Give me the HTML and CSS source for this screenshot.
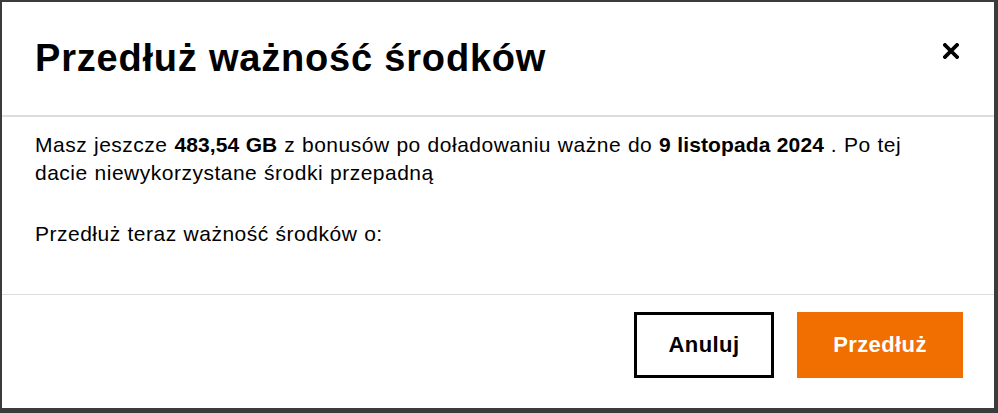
FILE: index.html
```html
<!DOCTYPE html>
<html lang="pl">
<head>
<meta charset="utf-8">
<link rel="stylesheet" href="styles.css">
</head>
<body>
<div class="dialog">
  <div class="header">
    <h1 class="title">Przedłuż ważność środków</h1>
    <button class="close" aria-label="Zamknij">
      <svg width="16" height="16" viewBox="0 0 16 16"><path d="M2 2 L14 14 M14 2 L2 14" stroke="#000" stroke-width="3.8" stroke-linecap="square" fill="none"/></svg>
    </button>
  </div>
  <div class="body">
    <p class="text">Masz jeszcze <b>483,54 GB</b> z bonusów po doładowaniu ważne do <b>9 listopada 2024</b> . Po tej dacie niewykorzystane środki przepadną</p>
    <p class="text second">Przedłuż teraz ważność środków o:</p>
  </div>
  <div class="footer">
    <button class="btn btn-outline">Anuluj</button>
    <button class="btn btn-primary">Przedłuż</button>
  </div>
</div>
</body>
</html>
```
FILE: styles.css
```css
* { box-sizing: border-box; }
html, body { margin: 0; padding: 0; }
body {
  width: 998px;
  height: 413px;
  background: #3b3b3b;
  font-family: "Liberation Sans", Arial, sans-serif;
  color: #000;
  overflow: hidden;
  padding: 2px 0 0 2px;
}
.dialog {
  width: 992px;
  height: 406px;
  background: #fff;
  display: flex;
  flex-direction: column;
}
.header {
  height: 115px;
  border-bottom: 2px solid #dddddd;
  display: flex;
  align-items: center;
  justify-content: space-between;
  padding: 0 35px 0 33px;
}
.title {
  margin: 0;
  font-size: 38px;
  font-weight: 700;
  letter-spacing: 0.8px;
}
.close {
  border: 0;
  background: none;
  padding: 0;
  width: 16px;
  height: 16px;
  align-self: flex-start;
  margin-top: 41px;
  display: flex;
}
.body {
  height: 178px;
  border-bottom: 1px solid #dddddd;
  padding: 14px 33px 0 33px;
}
.text {
  margin: 0;
  font-size: 21px;
  line-height: 28px;
  letter-spacing: 0.5px;
  word-spacing: 0.5px;
  max-width: 885px;
}
.text b { letter-spacing: 0.1px; }
.second { margin-top: 33px; }
.footer {
  flex: 1;
  display: flex;
  justify-content: flex-end;
  align-items: flex-start;
  gap: 23px;
  padding: 17px 31px 0 0;
}
.btn {
  height: 66px;
  font-family: "Liberation Sans", Arial, sans-serif;
  font-size: 22px;
  font-weight: 700;
  letter-spacing: 0.4px;
  cursor: pointer;
}
.btn-outline {
  width: 140px;
  background: #fff;
  border: 3px solid #000;
  color: #000;
}
.btn-primary {
  width: 166px;
  background: #f16e00;
  border: 0;
  color: #fff;
}
```
